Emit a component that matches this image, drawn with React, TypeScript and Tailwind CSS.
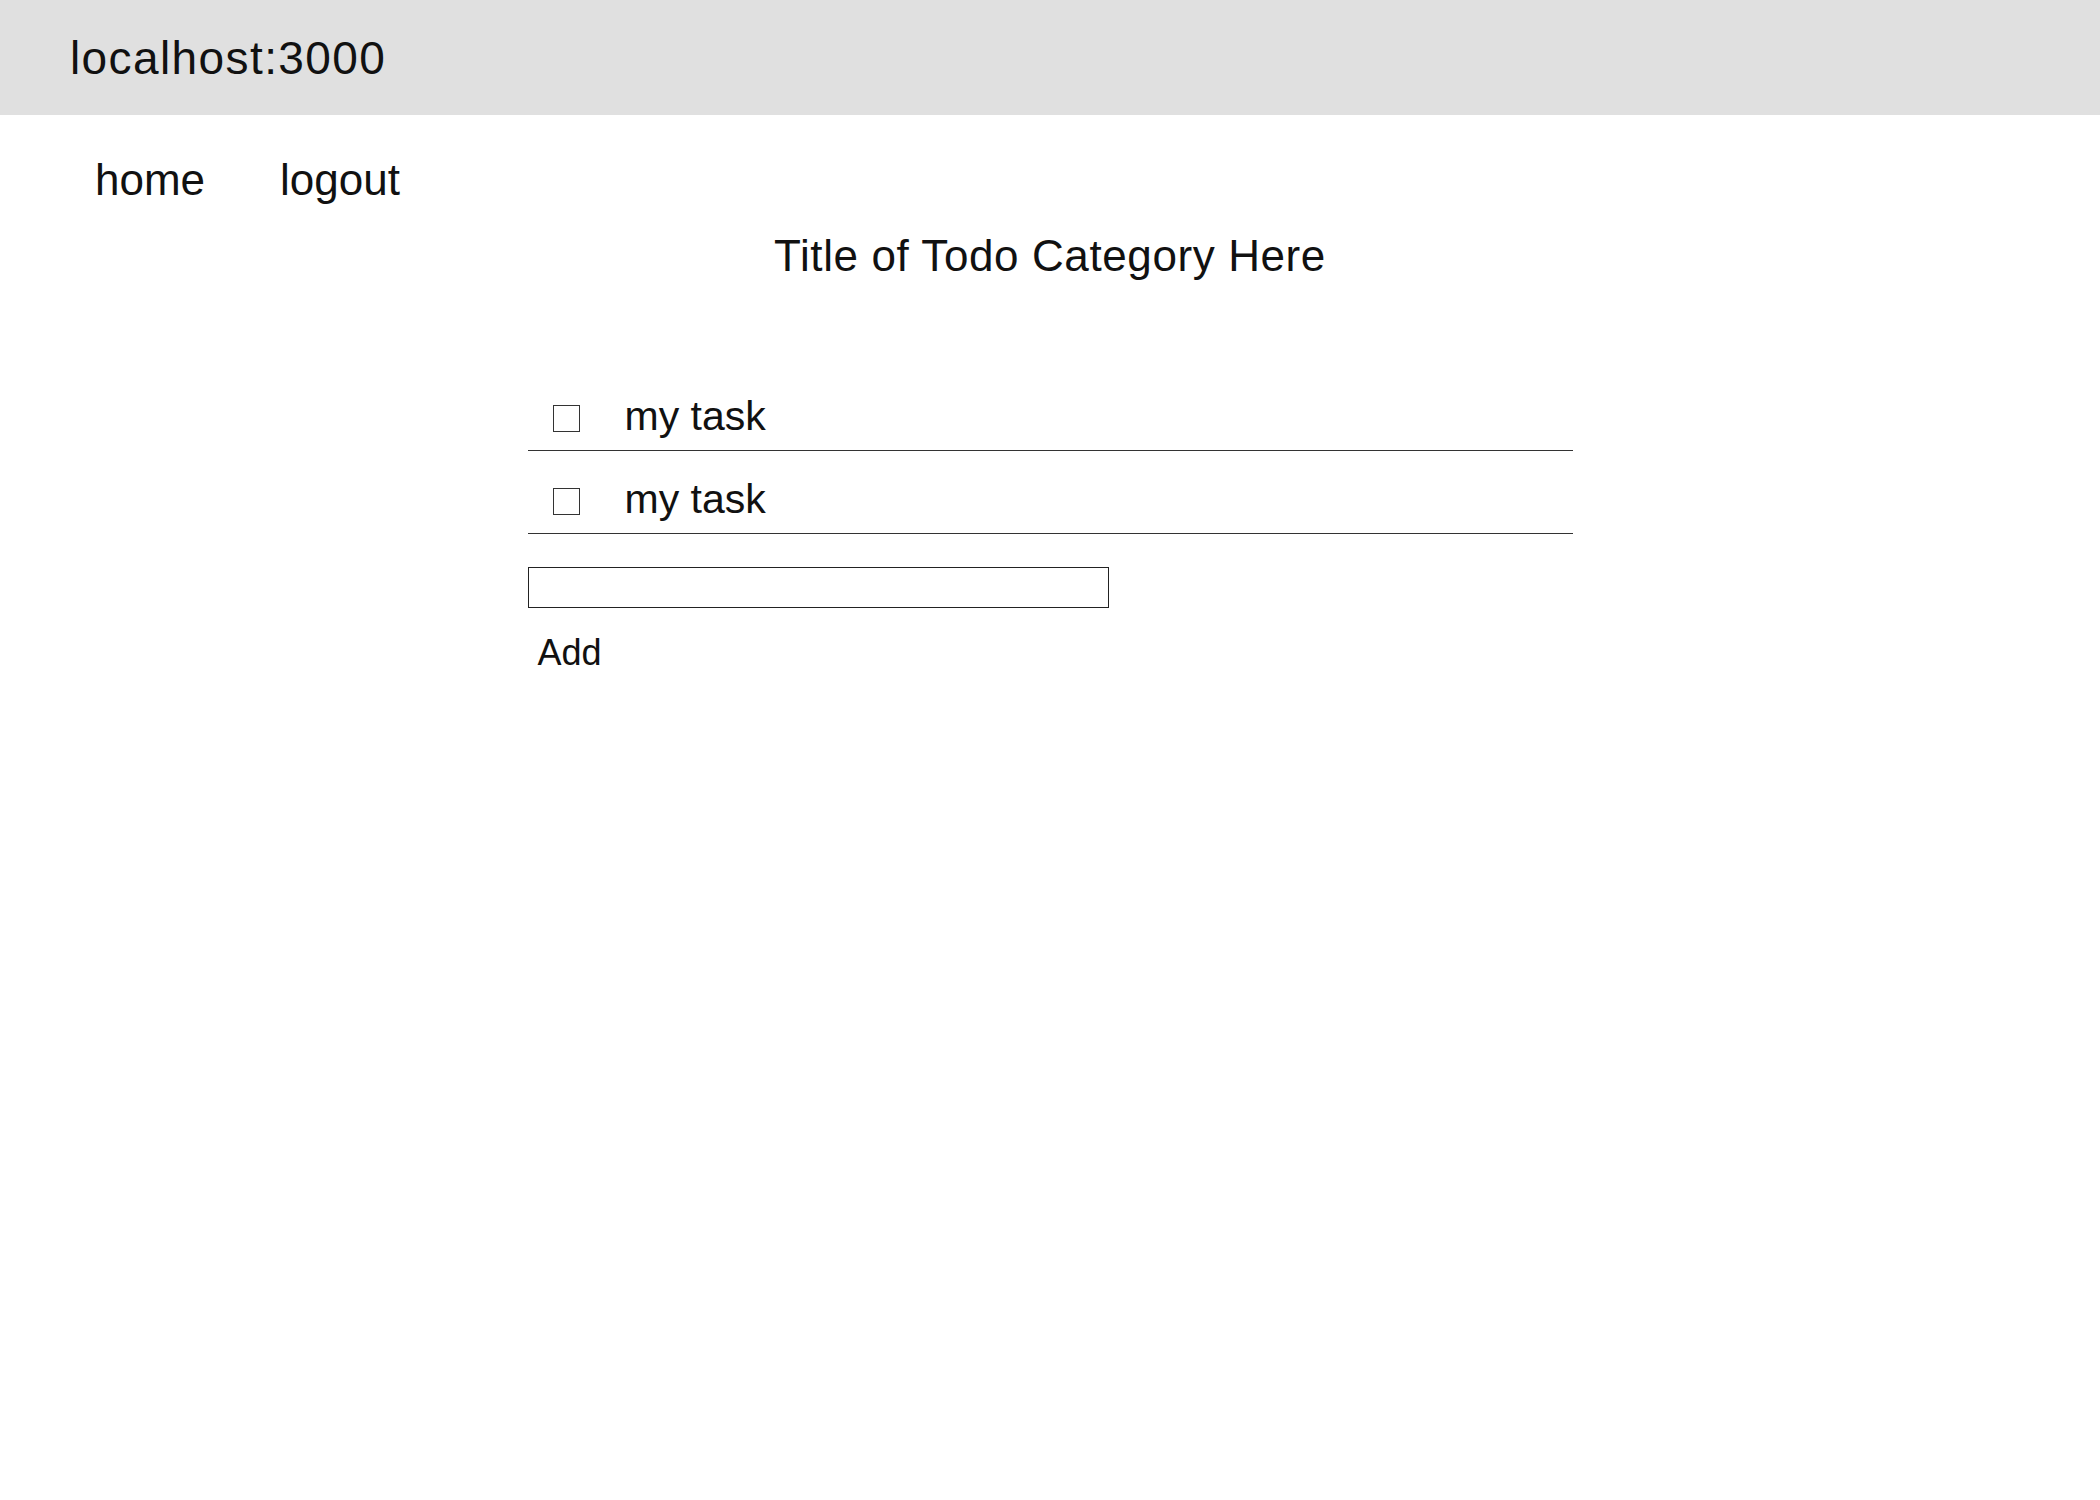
import { useState } from 'react';

const tasks = [
  { id: 1, label: 'my task' },
  { id: 2, label: 'my task' }
];

export default function App() {
  const [text, setText] = useState('');

  return (
    <div className="min-h-screen bg-white text-[#111] font-['Liberation_Sans',Arial,sans-serif]">
      <div className="h-[115px] bg-[#e0e0e0] flex items-center pl-[70px]">
        <span className="text-[46px] leading-[50px] tracking-[1.4px]">localhost:3000</span>
      </div>

      <nav className="mt-[40px] pl-[95px] flex gap-[75px] text-[44px] leading-[50px]">
        <a href="#">home</a>
        <a href="#">logout</a>
      </nav>

      <h1 className="mt-[26px] text-center text-[44px] leading-[50px] tracking-[0.6px]">
        Title of Todo Category Here
      </h1>

      <div className="mx-auto w-[1045px] mt-[87px]">
        <ul>
          {tasks.map((task) => (
            <li
              key={task.id}
              className="h-[83px] pt-[19px] border-b border-[#333] flex items-center gap-[45px] pl-[25px]"
            >
              <input
                type="checkbox"
                className="appearance-none w-[27px] h-[27px] border border-[#333] bg-white"
              />
              <span className="text-[41px] leading-[47px] mb-[5px]">{task.label}</span>
            </li>
          ))}
        </ul>

        <input
          value={text}
          onChange={(e) => setText(e.target.value)}
          className="mt-[33px] block w-[581px] h-[41px] border-[1.5px] border-[#222] outline-none px-2 text-[28px]"
        />
        <button className="mt-[24px] pl-[10px] text-[36px] leading-[41px]">Add</button>
      </div>
    </div>
  );
}
